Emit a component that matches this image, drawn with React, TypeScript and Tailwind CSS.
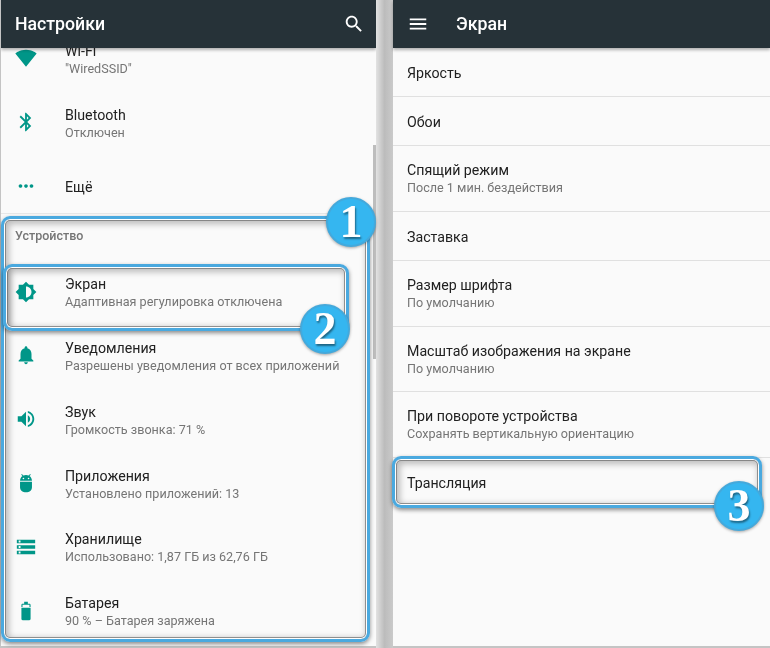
import React from 'react';

const SearchPath = 'M15.5 14h-.79l-.28-.27C15.41 12.59 16 11.11 16 9.5 16 5.91 13.09 3 9.5 3S3 5.91 3 9.5 5.91 16 9.5 16c1.61 0 3.09-.59 4.23-1.57l.27.28v.79l5 4.99L20.49 19l-4.99-5zm-6 0C7.01 14 5 11.99 5 9.5S7.01 5 9.5 5 14 7.01 14 9.5 11.99 14 9.5 14z';
const MenuPath = 'M3 18h18v-2H3v2zm0-5h18v-2H3v2zm0-7v2h18V6H3z';

const icons: Record<string, string> = {
  wifi: 'M12.01 21.49L23.64 7c-.45-.34-4.93-4-11.64-4C5.28 3 .81 6.66.36 7l11.64 14.5.01.01z',
  bluetooth: 'M17.71 7.71L12 2h-1v7.59L6.41 5 5 6.41 10.59 12 5 17.59 6.41 19 11 14.41V22h1l5.71-5.71-4.3-4.29 4.3-4.29zM13 5.83l1.88 1.88L13 9.59V5.83zm1.88 10.46L13 18.17v-3.76l1.88 1.88z',
  more: 'M6 10c-1.1 0-2 .9-2 2s.9 2 2 2 2-.9 2-2-.9-2-2-2zm12 0c-1.1 0-2 .9-2 2s.9 2 2 2 2-.9 2-2-.9-2-2-2zm-6 0c-1.1 0-2 .9-2 2s.9 2 2 2 2-.9 2-2-.9-2-2-2z',
  display: 'M20 15.31L23.31 12 20 8.69V4h-4.69L12 .69 8.69 4H4v4.69L.69 12 4 15.31V20h4.69L12 23.31 15.31 20H20v-4.69zM12 18V6c3.31 0 6 2.69 6 6s-2.69 6-6 6z',
  bell: 'M12 22c1.1 0 2-.9 2-2h-4c0 1.1.9 2 2 2zm6-6v-5c0-3.07-1.63-5.64-4.5-6.32V4c0-.83-.67-1.5-1.5-1.5s-1.5.67-1.5 1.5v.68C7.64 5.36 6 7.92 6 11v5l-2 2v1h16v-1l-2-2z',
  sound: 'M3 9v6h4l5 5V4L7 9H3zm13.5 3c0-1.77-1.02-3.29-2.5-4.03v8.05c1.48-.73 2.5-2.25 2.5-4.02zM14 3.23v2.06c2.89.86 5 3.54 5 6.71s-2.11 5.85-5 6.71v2.06c4.01-.91 7-4.49 7-8.77s-2.99-7.86-7-8.77z',
  android: 'M5.5 10.5h13V17a5 5 0 0 1-5 5h-3a5 5 0 0 1-5-5zM5.5 9.5C5.6 7.3 6.6 5.5 8.2 4.4L6.8 3l.7-.7L9.1 3.9A7 7 0 0 1 12 3.2c1 0 2 .2 2.9.7l1.6-1.6.7.7-1.4 1.4c1.6 1.1 2.6 2.9 2.7 5.1zM9.2 6.2a.9.9 0 1 0 0 1.8.9.9 0 0 0 0-1.8zm5.6 0a.9.9 0 1 0 0 1.8.9.9 0 0 0 0-1.8z',
  storage: 'M2 20h20v-4H2v4zm2-3h2v2H4v-2zM2 4v4h20V4H2zm4 3H4V5h2v2zm-4 7h20v-4H2v4zm2-3h2v2H4v-2z',
  battery: 'M7 8.5v12.17C7 21.4 7.6 22 8.33 22h7.33c.74 0 1.34-.6 1.34-1.33V8.5H7zM15.67 4H14V2h-4v2H8.33C7.6 4 7 4.6 7 5.33V7.5h1.2V5.3h7.6v2.2H17V5.33C17 4.6 16.4 4 15.67 4z',
};

const Icon = ({ d, className }: { d: string; className: string }) => (
  <svg viewBox="0 0 24 24" className={className} fill="currentColor">
    <path d={d} />
  </svg>
);

const settings = [
  { icon: 'wifi', title: 'Wi-Fi', sub: '"WiredSSID"' },
  { icon: 'bluetooth', title: 'Bluetooth', sub: 'Отключен' },
  { icon: 'more', title: 'Ещё' },
];

const device = [
  { icon: 'display', title: 'Экран', sub: 'Адаптивная регулировка отключена' },
  { icon: 'bell', title: 'Уведомления', sub: 'Разрешены уведомления от всех приложений' },
  { icon: 'sound', title: 'Звук', sub: 'Громкость звонка: 71 %' },
  { icon: 'android', title: 'Приложения', sub: 'Установлено приложений: 13' },
  { icon: 'storage', title: 'Хранилище', sub: 'Использовано: 1,87 ГБ из 62,76 ГБ' },
  { icon: 'battery', title: 'Батарея', sub: '90 % – Батарея заряжена' },
];

const display = [
  { title: 'Яркость', h: 'h-[49px]' },
  { title: 'Обои', h: 'h-[49px]' },
  { title: 'Спящий режим', sub: 'После 1 мин. бездействия', h: 'h-[66px]' },
  { title: 'Заставка', h: 'h-[49px]' },
  { title: 'Размер шрифта', sub: 'По умолчанию', h: 'h-[66px]' },
  { title: 'Масштаб изображения на экране', sub: 'По умолчанию', h: 'h-[65px]' },
  { title: 'При повороте устройства', sub: 'Сохранять вертикальную ориентацию', h: 'h-[66px]' },
  { title: 'Трансляция', h: 'h-[48px]' },
];

const SettingRow = ({ icon, title, sub }: { icon: string; title: string; sub?: string }) => (
  <div className="flex h-[63.8px] items-center">
    <div className="flex w-[64px] shrink-0 justify-center pr-[14px]">
      <Icon d={icons[icon]} className="h-[22px] w-[22px] text-[#009688]" />
    </div>
    <div className="min-w-0 pt-[3px]">
      <div className="text-[14.2px] leading-[18px] text-[#212121]">{title}</div>
      {sub && <div className="text-[12.6px] leading-[18px] text-[#757575]">{sub}</div>}
    </div>
  </div>
);

// обводка-выделение и номер шага поверх скриншота
const Highlight = ({ className }: { className: string }) => (
  <div className={`pointer-events-none absolute rounded-[9px] border-[3px] border-[#4aa9df] shadow-[0_2px_4px_rgba(0,0,0,0.45),inset_0_0_0_1px_#ffffff,inset_0_0_0_2px_rgba(110,110,110,0.7),inset_2px_2px_6px_3px_rgba(0,0,0,0.25)] ${className}`} />
);

const Badge = ({ n, className }: { n: number; className: string }) => (
  <div className={`absolute flex h-[50px] w-[50px] items-center justify-center rounded-full border-2 border-[#43a9dc] bg-[#35b6f0] font-['Liberation_Serif',serif] text-[46px] font-bold leading-none text-white [text-shadow:1px_2px_2px_rgba(0,0,0,0.45)] shadow-[0_1px_3px_rgba(0,0,0,0.35)] ${className}`}>
    {n}
  </div>
);

export default function App() {
  return (
    <div className="relative flex h-[648px] w-[770px] overflow-hidden bg-[#c4c4c4] pl-px font-['Roboto',sans-serif] blur-[0.4px]">
      {/* левый экран */}
      <div className="relative h-[646px] w-[375px] shrink-0 overflow-hidden bg-[#fafafa]">
        <div className="relative z-10 flex h-12 items-center justify-between bg-[#263238] pl-[14px] pr-[11px] text-white shadow-[0_2px_3px_rgba(0,0,0,0.3)]">
          <span className="text-[17.7px] font-medium">Настройки</span>
          <Icon d={SearchPath} className="h-[22px] w-[22px]" />
        </div>
        <div className="-mt-[21.5px]">
          {settings.map(s => (
            <SettingRow key={s.title} {...s} />
          ))}
          <div className="-mt-[5px] h-[46.9px] border-t border-[#e8e8e8] px-[14px] pt-[14px] text-[12.5px] font-medium leading-[15px] text-[#757575]">
            Устройство
          </div>
          {device.map(s => (
            <SettingRow key={s.title} {...s} />
          ))}
        </div>
        <div className="absolute right-0 top-[145px] h-[214px] w-[3px] bg-[#bdbdbd]" />
      </div>

      <div className="h-full w-[17px] shrink-0 bg-gradient-to-r from-[#e2e2e2] via-[#bcbcbc] to-[#cacaca]" />

      {/* правый экран */}
      <div className="h-[646px] flex-1 bg-[#fafafa]">
        <div className="flex h-12 items-center gap-[27px] bg-[#263238] pl-[14px] text-white shadow-[0_2px_3px_rgba(0,0,0,0.3)]">
          <Icon d={MenuPath} className="h-[22px] w-[22px]" />
          <span className="text-[17.7px] font-medium">Экран</span>
        </div>
        {display.map((row, i) => (
          <div
            key={row.title}
            className={`flex flex-col justify-center px-[14px] pt-[1px] ${row.h} ${i < display.length - 1 ? 'border-b border-[#e0e0e0]' : ''}`}
          >
            <div className="text-[14.2px] leading-[18px] text-[#212121]">{row.title}</div>
            {row.sub && <div className="text-[12.6px] leading-[18px] text-[#757575]">{row.sub}</div>}
          </div>
        ))}
      </div>

      <Highlight className="left-[1px] top-[216px] h-[426px] w-[369px]" />
      <Highlight className="left-[3px] top-[264px] h-[67px] w-[346px]" />
      <Highlight className="left-[392px] top-[456px] h-[52px] w-[370px]" />
      <Badge n={1} className="left-[326px] top-[197px]" />
      <Badge n={2} className="left-[300px] top-[304px]" />
      <Badge n={3} className="left-[714px] top-[481px]" />
    </div>
  );
}
